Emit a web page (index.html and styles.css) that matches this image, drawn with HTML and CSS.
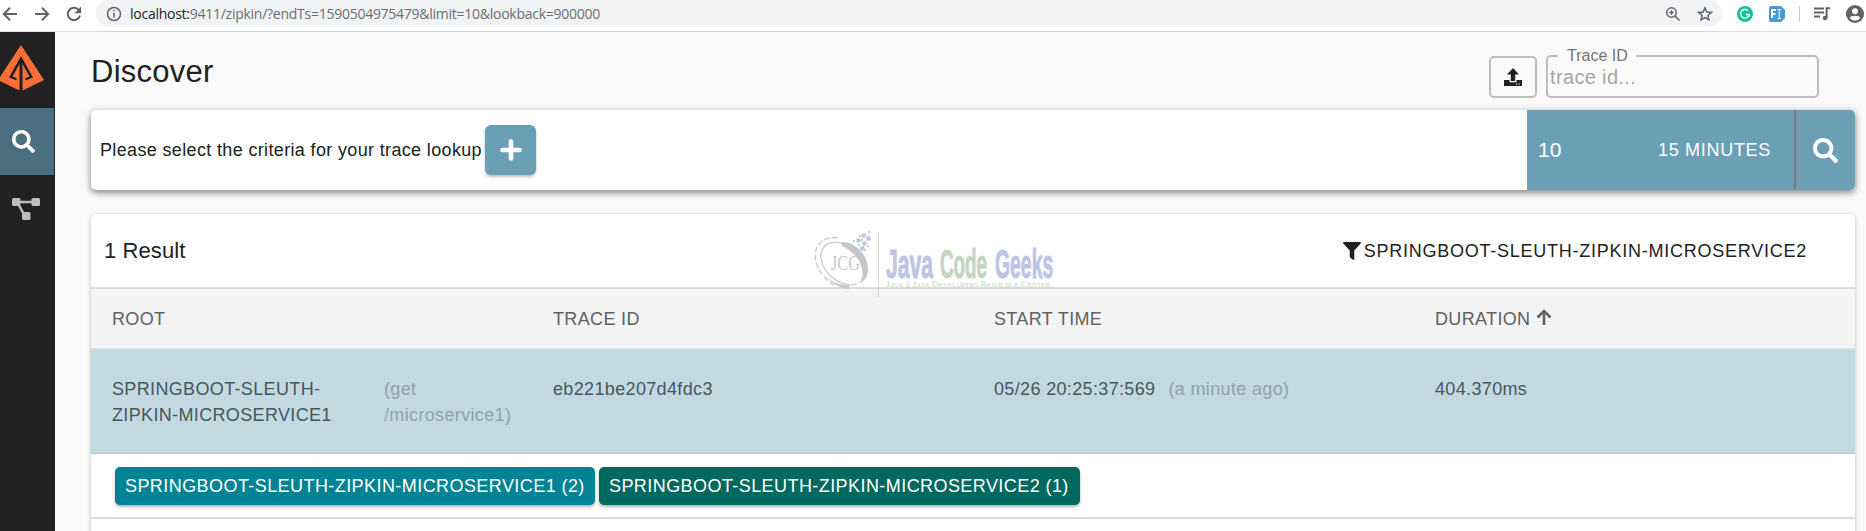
FILE: index.html
```
<!DOCTYPE html>
<html lang="en">
<head>
<meta charset="utf-8">
<title>Zipkin</title>
<link rel="stylesheet" href="styles.css">
</head>
<body>
<header class="toolbar">
  <nav class="nav">
    <svg width="16" height="16" viewBox="0 0 16 16"><path d="M15 8H2M8 1.800 1.800 8 8 14.200" class="line"/></svg>
    <svg width="16" height="16" viewBox="0 0 16 16"><path d="M1 8h13M8 1.800 14.200 8 8 14.200" class="line"/></svg>
    <svg width="16" height="16" viewBox="0 0 16 16"><path d="M13.200 4.600A6.200 6.200 0 1 0 14 9.600" class="line"/><path d="M15 .8v6.400H8.600z" fill="#5f6368"/></svg>
  </nav>
  <div class="omnibox">
    <svg class="info" width="16" height="16" viewBox="0 0 16 16"><circle cx="8" cy="8" r="6.500" class="thin"/><path d="M8 7v4.600M8 4v1.600" class="thin"/></svg>
    <span class="url"><b>localhost:</b>9411/zipkin/?endTs=1590504975479&amp;limit=10&amp;lookback=900000</span>
    <svg class="lens" width="16" height="16" viewBox="0 0 16 16"><circle cx="6.500" cy="6.500" r="4.700" class="thin"/><path d="m10 10 4.500 4.500M4.300 6.500h4.400M6.500 4.300v4.400" class="thin"/></svg>
    <svg width="16" height="16" viewBox="0 0 16 16"><path d="m8 1.800 1.800 4.200 4.500.4-3.400 3 1 4.400L8 11.500l-3.900 2.300 1-4.400-3.400-3 4.500-.4z" class="thin"/></svg>
  </div>
  <div class="tools">
    <svg width="16" height="16" viewBox="0 0 16 16"><circle cx="8" cy="8" r="8" fill="#15c39a"/><path d="M11 4.700A4.300 4.300 0 1 0 12.200 8.500H8.800M12.200 8.500v2.600" fill="none" stroke="#fff" stroke-width="1.400"/></svg>
    <svg width="16" height="16" viewBox="0 0 16 16"><path d="M2 0h10l4 4v8l-4 4H2a2 2 0 0 1-2-2V2a2 2 0 0 1 2-2z" fill="#459bd7"/><path d="M3 12V4h4M3 8h3.500" fill="none" stroke="#fff" stroke-width="1.800"/><path d="M8.500 3.500h3.500M8.500 12.500h3.500M10.200 3.500v9" fill="none" stroke="#fff" stroke-width="1"/></svg>
    <i class="sep"></i>
    <svg width="16" height="16" viewBox="0 0 16 16"><path d="M0 2.500h10M0 6.500h10M0 10.500h6M12.600 12V2.300H16" class="line"/><circle cx="11" cy="12" r="2.300" fill="#5f6368"/></svg>
    <svg width="18" height="18" viewBox="0 0 18 18"><circle cx="9" cy="9" r="9" fill="#5f6368"/><circle cx="9" cy="6.200" r="2.900" fill="#fff"/><path d="M3.600 13c1.200-3 9.600-3 10.800 0a7 7 0 0 1-10.800 0z" fill="#fff"/></svg>
  </div>
</header>
<div class="app">
  <aside class="sidebar">
    <div class="logo"><svg width="44" height="46" viewBox="0 0 44 46"><path d="M21 0 44 35 22.500 45.500V19l7 12.500-4 1.500v2.500l7.500-3L21 11 9 32.500l7.500 3V33l-4-1.500 7-12.500v26.500L-2 35z" fill="#ff6f35"/></svg></div>
    <div class="item active"><svg width="23" height="23" viewBox="0 0 512 512"><path fill="#fff" d="M505 442.700 405.300 343c-4.500-4.500-10.600-7-17-7H372c27.600-35.300 44-79.700 44-128C416 93.100 322.900 0 208 0S0 93.100 0 208s93.100 208 208 208c48.300 0 92.700-16.400 128-44v16.300c0 6.400 2.500 12.500 7 17l99.700 99.700c9.400 9.400 24.600 9.400 33.900 0l28.300-28.300c9.400-9.400 9.400-24.600.1-34zM208 336c-70.700 0-128-57.200-128-128 0-70.700 57.200-128 128-128 70.700 0 128 57.200 128 128 0 70.700-57.200 128-128 128z"/></svg></div>
    <div class="item"><svg width="28" height="22" viewBox="0 0 28 22"><path d="M5 4h18M5 4l8 14" stroke="#bdbdbd" stroke-width="2.500"/><g fill="#bdbdbd"><rect width="8.500" height="8" rx="1.500"/><rect x="19.500" width="8.500" height="8" rx="1.500"/><rect x="10" y="14" width="8.500" height="8" rx="1.500"/></g></svg></div>
  </aside>
  <main class="main">
    <div class="heading">
      <h1>Discover</h1>
      <div class="lookup">
        <button class="upload"><svg width="18" height="18" viewBox="0 0 18 18"><path d="M9 0 15 6.500h-3.800V13H6.800V6.500H3z" fill="#212121"/><path d="M0 12h5.500v2.300h7V12H18v6H0z" fill="#212121"/><path d="M12 16h1.300M14.500 16h1.300" stroke="#fff" stroke-width="1.200"/></svg></button>
        <fieldset class="trace"><legend>Trace ID</legend><span>trace id...</span></fieldset>
      </div>
    </div>
    <section class="card search">
      <span class="hint">Please select the criteria for your trace lookup</span>
      <button class="add"><svg width="22" height="22" viewBox="0 0 22 22"><path d="M11 2.500v17M2.500 11h17" stroke="#fff" stroke-width="4.600" stroke-linecap="round"/></svg></button>
      <div class="controls"><span class="limit">10</span><span class="range">15 MINUTES</span></div>
      <button class="go"><svg width="25" height="25" viewBox="0 0 512 512"><path fill="#fff" d="M505 442.700 405.300 343c-4.500-4.500-10.600-7-17-7H372c27.600-35.300 44-79.700 44-128C416 93.100 322.900 0 208 0S0 93.100 0 208s93.100 208 208 208c48.300 0 92.700-16.400 128-44v16.300c0 6.400 2.500 12.500 7 17l99.700 99.700c9.400 9.400 24.600 9.400 33.900 0l28.300-28.300c9.400-9.400 9.400-24.600.1-34zM208 336c-70.700 0-128-57.200-128-128 0-70.700 57.200-128 128-128 70.700 0 128 57.200 128 128 0 70.700-57.200 128-128 128z"/></svg></button>
    </section>
    <section class="card results">
      <div class="summary">
        <span class="count">1 Result</span>
        <svg width="18" height="18" viewBox="0 0 18 18"><path d="M.8 0h16.400c.8 0 1 .8.600 1.300L11.300 8.500V17c0 .8-.8 1.200-1.400.8l-2.500-2c-.5-.4-.7-.6-.7-1.200V8.500L.2 1.300C-.2.8 0 0 .8 0z" fill="#212121"/></svg>
        <span class="filter">SPRINGBOOT-SLEUTH-ZIPKIN-MICROSERVICE2</span>
      </div>
      <div class="row head"><span>ROOT</span><span>TRACE ID</span><span>START TIME</span><span>DURATION <svg width="16" height="16" viewBox="0 0 16 16"><path d="M8 16V2M1.500 8.500 8 2l6.500 6.500" fill="none" stroke="#616161" stroke-width="2.600"/></svg></span></div>
      <div class="row trace-row">
        <div class="root"><span>SPRINGBOOT-SLEUTH-<br>ZIPKIN-MICROSERVICE1</span><span class="muted">(get<br>/microservice1)</span></div>
        <span>eb221be207d4fdc3</span>
        <span>05/26 20:25:37:569<span class="muted ago">(a minute ago)</span></span>
        <span>404.370ms</span>
      </div>
      <div class="chips"><span class="chip teal">SPRINGBOOT-SLEUTH-ZIPKIN-MICROSERVICE1 (2)</span><span class="chip green">SPRINGBOOT-SLEUTH-ZIPKIN-MICROSERVICE2 (1)</span></div>
      <svg class="watermark" width="245" height="70" viewBox="0 0 245 70">
        <g fill="none">
          <path d="M43 53C28 57 9 44 7 27 6 14 17 8 30 13" stroke="#d0d0d0" stroke-width="1.500"/>
          <path d="M28 11c14 0 26 13 26 28 0 7-4 12-9 13 8-8 3-28-17-37z" fill="#c6c6c6"/>
          <path d="M11 44c6 7 14 10 24 10v4c-10-1-18-6-24-14z" fill="#c9c9c9"/>
          <path d="M24 7C12 5 2 11 1 24c0 11 8 23 19 30" stroke="#c5d0ec" stroke-width="1.500" stroke-dasharray="6 2"/>
          <path d="M64.500 1v65" stroke="#d4d4d4"/>
        </g>
        <g fill="#bcc6e6"><path d="m42 8 4-1 1 4-4 1zM47 3l4-1 1 4-4 1zM52 6l4-1 1 4-4 1zM48 11l4-1 1 4-4 1zM46 16l4-1 1 4-4 1z"/></g>
        <g fill="#bdd6bb"><path d="M39 9h2v2h-2zM45 4h2v2h-2zM54 0h2v2h-2zM47 8h2v2h-2zM53 14h2v2h-2zM50 18h2v2h-2zM44 13h2v2h-2z"/></g>
        <text x="17" y="39" class="jcg" textLength="29" lengthAdjust="spacingAndGlyphs">JCG</text>
        <text transform="translate(72 47) scale(.53 1)" class="brand blue">Java</text>
        <text transform="translate(126 47) scale(.47 1)" class="brand leaf">Code</text>
        <text transform="translate(181 47) scale(.485 1)" class="brand blue">Geeks</text>
        <text x="72" y="56" class="tagline" textLength="164" lengthAdjust="spacingAndGlyphs">Java 2 Java Developers Resource Center</text>
      </svg>
    </section>
  </main>
</div>
</body>
</html>
```
FILE: styles.css
```
* { box-sizing: border-box; }
body { margin: 0; height: 531px; overflow: hidden; background: #fafafa; color: #212121; font: 18px "Liberation Sans", Arial, sans-serif; letter-spacing: .35px; }
svg { display: block; flex: none; }
button { padding: 0; border: 0; display: flex; align-items: center; justify-content: center; }
.line { fill: none; stroke: #5f6368; stroke-width: 2; }
.thin { fill: none; stroke: #5f6368; stroke-width: 1.500; }
.toolbar { height: 32px; display: flex; background: #fff; border-bottom: 1px solid #d5d7da; }
.nav { width: 96px; height: 27px; padding-left: 2px; display: flex; align-items: center; gap: 16px; }
.omnibox { width: 1626px; height: 27px; padding: 0 9px 0 10px; display: flex; align-items: center; background: #f1f3f4; border-radius: 12px 14px 14px 14px; }
.url { flex: 1; margin-left: 8px; padding-bottom: 1px; font: 14px "Open Sans", "Noto Sans", sans-serif; letter-spacing: -.26px; color: #6a6e73; }
.url b { font-weight: 400; color: #202124; }
.lens { margin-right: 16px; }
.tools { height: 27px; display: flex; align-items: center; padding-left: 15px; gap: 16px; }
.sep { width: 1px; height: 16px; margin: 0 -2px; background: #c8cace; }
.app { display: flex; height: 499px; }
.sidebar { flex: none; width: 55px; background: #212121; }
.logo { height: 76px; padding-top: 13px; }
.item { width: 54px; height: 67px; display: flex; align-items: center; padding-left: 12px; }
.active { background: #4a6f7f; }
.main { flex: 1; min-width: 0; padding: 0 11px 0 36px; }
.heading { height: 78px; display: flex; justify-content: space-between; }
h1 { margin: 22px 0 0; font-size: 31px; line-height: 36px; font-weight: 400; letter-spacing: .25px; }
.lookup { display: flex; align-items: flex-start; padding-right: 36px; gap: 9px; }
.upload { width: 48px; height: 42px; margin-top: 24px; border: 2px solid #bdbdbd; border-radius: 5px; background: transparent; }
.trace { width: 273px; height: 51px; margin: 15px 0 0; padding: 0 2px; border: 2px solid #bdbdbd; border-radius: 5px; color: #a5a5a5; font-size: 20px; line-height: 24px; }
.trace legend { margin-left: 8px; padding: 0 8px 0 9px; font-size: 16px; line-height: 18px; letter-spacing: 0; color: #757575; }
.trace span { display: block; }
.card { background: #fff; border-radius: 5px; }
.search { height: 80px; display: flex; align-items: center; padding-left: 9px; box-shadow: 0 3px 6px rgba(0,0,0,.4), 0 0 8px rgba(0,0,0,.12); }
.hint { width: 385px; white-space: nowrap; }
.add { width: 51px; height: 50px; background: #6a9fb5; border-radius: 6px; box-shadow: 0 2px 3px rgba(0,0,0,.25); }
.controls { width: 267px; height: 80px; margin-left: auto; padding: 0 23px 0 11px; display: flex; align-items: center; justify-content: space-between; color: #fff; background: #6a9fb5; }
.limit { font-size: 21px; letter-spacing: 0; }
.range { letter-spacing: .7px; }
.go { width: 61px; height: 80px; background: #6a9fb5; border-left: 2px solid #80797b; border-radius: 0 5px 5px 0; }
.results { position: relative; height: 330px; margin-top: 24px; box-shadow: 0 1px 4px rgba(0,0,0,.25); }
.summary { height: 75px; display: flex; align-items: center; padding: 1px 48px 0 13px; border-bottom: 2px solid #dcdcdc; }
.count { margin-right: auto; font-size: 22px; letter-spacing: .1px; }
.filter { margin-left: 3px; letter-spacing: .75px; }
.row { display: grid; grid-template-columns: repeat(3, 441px) 1fr; padding-left: 21px; }
.head { height: 61px; padding-top: 1px; align-items: center; background: #f4f4f4; border-bottom: 2px solid #d8e0e1; color: #616161; }
.head span { display: flex; gap: 6px; }
.trace-row { height: 104px; padding-top: 26px; line-height: 26px; background: #c3d9e1; border-bottom: 1px solid #b5c8d0; color: #46565e; }
.root { display: grid; grid-template-columns: 272px auto; }
.muted { color: #8fa3ad; }
.ago { margin-left: 13px; }
.chips { height: 65px; display: flex; gap: 4px; padding: 13px 0 0 24px; border-bottom: 2px solid #dcdcdc; }
.chip { width: 480px; height: 38px; padding-left: 10px; line-height: 38px; color: #fff; border-radius: 5px; box-shadow: 0 2px 3px rgba(0,0,0,.3); white-space: nowrap; letter-spacing: .43px; }
.teal { background: #008394; }
.green { width: 481px; background: #00695f; }
.watermark { position: absolute; left: 723px; top: 17px; }
.brand { font: 700 40px "Liberation Sans", sans-serif; letter-spacing: 0; stroke-width: 1; }
.blue { fill: #bcc6e4; stroke: #bcc6e4; }
.leaf { fill: #c4d5c0; stroke: #c4d5c0; }
.jcg { font: 21px "Liberation Serif", serif; letter-spacing: 0; fill: #c8c8c8; }
.tagline { font: small-caps 8px "Liberation Serif", serif; letter-spacing: 0; fill: #c2d8b9; }
```
